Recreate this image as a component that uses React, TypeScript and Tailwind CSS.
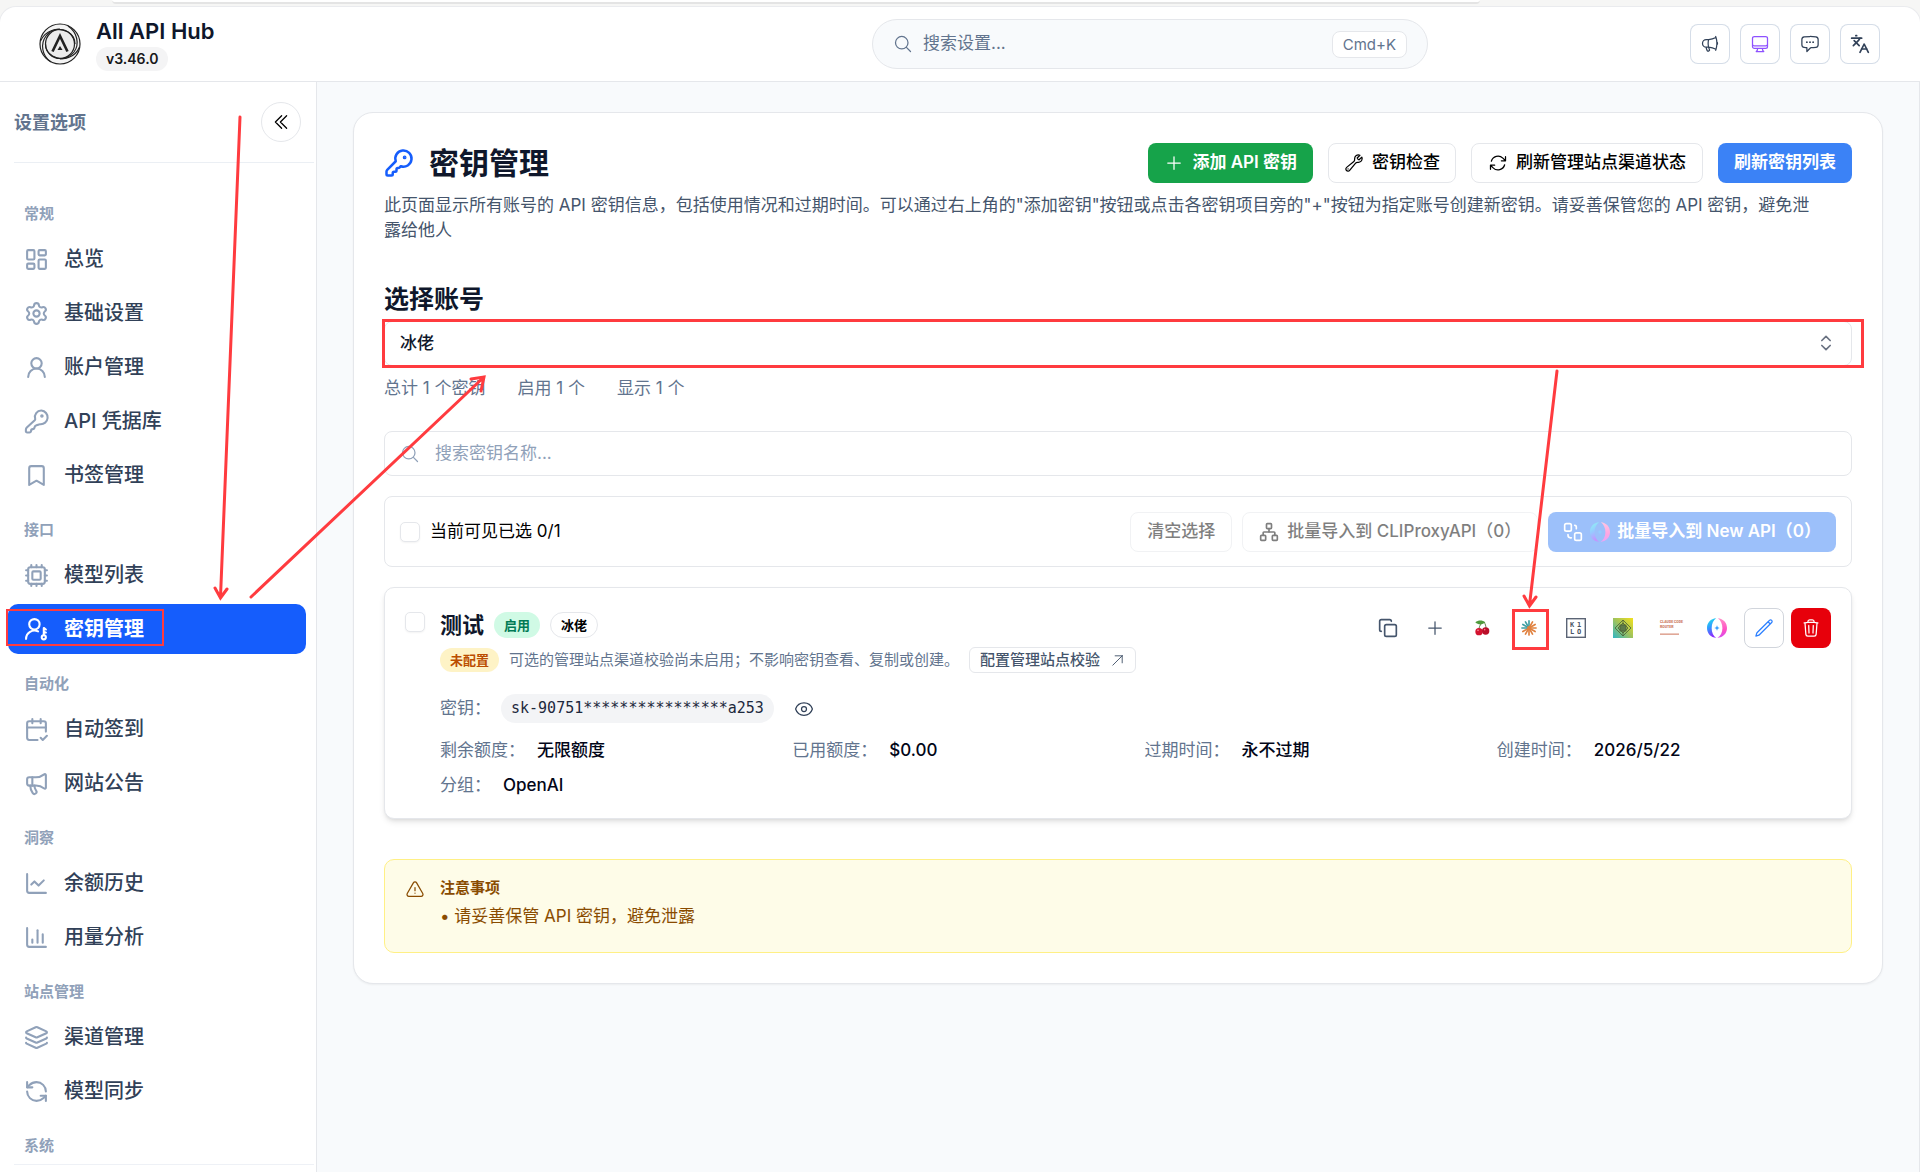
import type React from "react"
import {
    Bookmark,
    CalendarCheck2,
    ChartColumn,
    ChartLine,
    ChevronsUpDown,
    Copy,
    Cpu,
    KeyRound,
    Languages,
    Layers,
    LayoutDashboard,
    Megaphone,
    Network,
    RefreshCcw,
    Settings,
    UserRound,
} from "lucide-react"
import {
    HiOutlineArrowPath,
    HiOutlineArrowUpRight,
    HiOutlineChatBubbleLeftEllipsis,
    HiOutlineChevronDoubleLeft,
    HiOutlineComputerDesktop,
    HiOutlineExclamationTriangle,
    HiOutlineEye,
    HiOutlineMagnifyingGlass,
    HiOutlineMegaphone,
    HiOutlinePencil,
    HiOutlinePlus,
    HiOutlineTrash,
    HiOutlineWrench,
} from "react-icons/hi2"

type IconComponent = React.ComponentType<{ className?: string }>

interface NavItem {
    label: string
    icon: IconComponent
    active?: boolean
}

interface NavSection {
    title: string
    items: NavItem[]
}

const UserKeyIcon: IconComponent = ({ className }) => (
    <svg className={className} viewBox="0 0 24 24" fill="none" stroke="currentColor" strokeWidth="2" strokeLinecap="round" strokeLinejoin="round">
        <circle cx="10" cy="7" r="5" />
        <path d="M2 21a8 8 0 0 1 11.500-7.200" />
        <circle cx="19" cy="19.500" r="2" />
        <path d="M19 17.500V10.500l2 1.500M19 14l2 1" />
    </svg>
)

const RoundedKeyIcon: IconComponent = ({ className }) => (
    <svg className={className} viewBox="0 0 24 24" fill="none" stroke="currentColor" strokeWidth="2" strokeLinecap="round" strokeLinejoin="round">
        <path d="M16.5 1.5a6 6 0 0 0-5.8 7.6c.2.7 0 1.200-.4 1.600L2.700 17.800a3 3 0 0 0-.9 2.100v1.400a1.200 1.200 0 0 0 1.200 1.200h2.200a1.600 1.600 0 0 0 1.600-1.600c0-.9.7-1.600 1.600-1.600.8 0 1.400-.5 1.600-1.200l.3-1c.2-.6.6-1 1.200-1.200l1.300-.5c1-.4 1.700-.9 2.700-.8a6 6 0 1 0 1.200-13.100z" />
        <circle cx="17.200" cy="6.800" r=".7" fill="currentColor" />
    </svg>
)

const SwapBoxesIcon: IconComponent = ({ className }) => (
    <svg className={className} viewBox="0 0 24 24" fill="none" stroke="currentColor" strokeWidth="2" strokeLinecap="round" strokeLinejoin="round">
        <rect x="2" y="2" width="8" height="9" rx="2" />
        <rect x="14" y="13" width="8" height="9" rx="2" />
        <path d="M14 4a2 2 0 0 1 2 2v2M6 15v1a3 3 0 0 0 3 3h1" />
    </svg>
)

const HubLogo: IconComponent = ({ className }) => (
    <svg className={className} viewBox="0 0 42 42" fill="none" stroke="#222" strokeWidth="1.2">
        <circle cx="21" cy="21" r="20" fill="#f4f4f4" />
        <circle cx="21" cy="21" r="14.500" fill="#ececec" />
        <path d="M1.500 18C6 8 18 3 29 9c5 3 7 7 7 12" />
        <path d="M29 3c9 6 12 18 6 26-4 5-9 7-14 7" />
        <path d="M40.500 24c-4 10-16 15-27 9-5-3-7-7-7-12" />
        <path d="M12 39C3 33 1 21 7 13c4-5 9-7 14-7" />
        <path d="M13.500 28.500 21 13l7.500 15.500" strokeWidth="2.600" />
        <path d="m18.500 27 2.500-4 2.500 4z" fill="#222" stroke="none" />
    </svg>
)

const NewApiLogo: IconComponent = ({ className }) => (
    <svg className={className} viewBox="0 0 24 24">
        <defs>
            <linearGradient id="ringLeft" x1="0" y1="0" x2="0.300" y2="1">
                <stop offset="0" stopColor="#22f0e8" />
                <stop offset="0.500" stopColor="#2f9bff" />
                <stop offset="1" stopColor="#8a2cff" />
            </linearGradient>
            <linearGradient id="ringRight" x1="0" y1="0" x2="0" y2="1">
                <stop offset="0" stopColor="#ff8fc8" />
                <stop offset="0.600" stopColor="#ff4fc4" />
                <stop offset="1" stopColor="#d44df0" />
            </linearGradient>
        </defs>
        <path d="M11 .3C4.500.6 0 5.600 0 12c0 6.500 4.800 11.700 11 11.800-3.400-2-5.400-6.500-5.400-11.600S7.600 2.400 11 .3z" fill="url(#ringLeft)" />
        <path d="M13 .2c6.500.5 11 5.400 11 11.800 0 6.500-4.800 11.500-11.500 11.700 3.600-2 6-6.300 6-11.500C18.500 7 16.500 2.600 13 .2z" fill="url(#ringRight)" />
        <path d="M12 8.800l.9 2.300 2.300.9-2.300.9-.9 2.300-.9-2.300-2.300-.9 2.300-.9z" fill="#2f9bff" />
    </svg>
)

const CherryLogo: IconComponent = ({ className }) => (
    <svg className={className} viewBox="0 0 24 24" fill="none">
        <path d="M15 3C10 5 8 9 7.500 13M15 3c2 3 3 6 3 10" stroke="#4d6b2f" strokeWidth="1.300" />
        <path d="M17 3.500C12-.5 6 .5 2 3.500c4 4 10 4.500 15 0z" fill="#4f9a3c" />
        <circle cx="7.500" cy="17.500" r="5.500" fill="#d3122f" />
        <circle cx="17.500" cy="16.500" r="5.500" fill="#b90d28" />
        <circle cx="6" cy="15.500" r="1.200" fill="#ff8d9c" />
        <circle cx="16" cy="14.500" r="1.200" fill="#ff7488" />
    </svg>
)

const rays = [0, 30, 60, 90, 120, 150, 180, 210, 240, 270, 300, 330]

const StarburstLogo: IconComponent = ({ className }) => (
    <svg className={className} viewBox="0 0 24 24" strokeWidth="2" strokeLinecap="round">
        {rays.map((angle) => (
            <line key={angle} x1="12" y1="12" x2="12" y2="3.500" stroke={angle > 250 || angle === 0 ? "#3f9fa3" : "#e0813f"} transform={`rotate(${angle} 12 12)`} />
        ))}
        <circle cx="12" cy="12" r="2.500" fill="#e0813f" />
    </svg>
)

const KiloLogo: IconComponent = ({ className }) => (
    <svg className={className} viewBox="0 0 20 20">
        <rect x="0.700" y="0.700" width="18.600" height="18.600" fill="none" stroke="#5b6475" strokeWidth="1.400" />
        <g fill="#4b5566" fontFamily="DejaVu Sans Mono, monospace" fontSize="7" fontWeight="700">
            <text x="4" y="9">K</text>
            <text x="11" y="9">1</text>
            <text x="4" y="16">L</text>
            <text x="11" y="16">O</text>
        </g>
    </svg>
)

const DiamondLogo: IconComponent = ({ className }) => (
    <svg className={className} viewBox="0 0 20 20" fill="none" stroke="#4a5f35" strokeWidth="0.800">
        <defs>
            <linearGradient id="tile" x1="1" y1="0" x2="0" y2="1">
                <stop offset="0" stopColor="#f3e11c" />
                <stop offset="0.500" stopColor="#9fc35c" />
                <stop offset="1" stopColor="#2fb6c6" />
            </linearGradient>
        </defs>
        <rect width="20" height="20" fill="url(#tile)" stroke="none" />
        <path d="m10 2 8 8-8 8-8-8z" />
        <path d="m10 5 5 5-5 5-5-5z" />
        <rect x="7" y="7" width="6" height="6" fill="#5c7a4a" />
        <path d="M10 2v5M10 13v5" />
    </svg>
)

const RouterLogo: IconComponent = ({ className }) => (
    <svg className={className} viewBox="0 0 20 20" overflow="visible">
        <g fill="#cc7a63" fontFamily="Roboto, sans-serif" fontSize="3.500" fontWeight="900">
            <text x="0" y="5">CLAUDE CODE</text>
            <text x="0" y="10">ROUTER</text>
        </g>
        <rect y="15.500" width="19" height="1.300" fill="#d9937f" />
    </svg>
)

const sections: NavSection[] = [
    {
        title: "常规",
        items: [
            { label: "总览", icon: LayoutDashboard },
            { label: "基础设置", icon: Settings },
            { label: "账户管理", icon: UserRound },
            { label: "API 凭据库", icon: RoundedKeyIcon },
            { label: "书签管理", icon: Bookmark },
        ],
    },
    {
        title: "接口",
        items: [
            { label: "模型列表", icon: Cpu },
            { label: "密钥管理", icon: UserKeyIcon, active: true },
        ],
    },
    {
        title: "自动化",
        items: [
            { label: "自动签到", icon: CalendarCheck2 },
            { label: "网站公告", icon: Megaphone },
        ],
    },
    {
        title: "洞察",
        items: [
            { label: "余额历史", icon: ChartLine },
            { label: "用量分析", icon: ChartColumn },
        ],
    },
    {
        title: "站点管理",
        items: [
            { label: "渠道管理", icon: Layers },
            { label: "模型同步", icon: RefreshCcw },
        ],
    },
    { title: "系统", items: [] },
]

const headerActions = [
    { label: "公告", icon: HiOutlineMegaphone, color: "text-slate-700" },
    { label: "主题", icon: HiOutlineComputerDesktop, color: "text-violet-500" },
    { label: "反馈", icon: HiOutlineChatBubbleLeftEllipsis, color: "text-slate-700" },
    { label: "语言", icon: Languages, color: "text-slate-700" },
]

const keyActions = [
    { label: "复制", icon: Copy, size: "size-5" },
    { label: "添加", icon: HiOutlinePlus, size: "size-5" },
    { label: "Cherry Studio", icon: CherryLogo, size: "size-4" },
    { label: "Claude", icon: StarburstLogo, size: "size-5" },
    { label: "Kilo Code", icon: KiloLogo, size: "size-5" },
    { label: "CLIProxyAPI", icon: DiamondLogo, size: "size-5" },
    { label: "Claude Code Router", icon: RouterLogo, size: "size-5" },
    { label: "New API", icon: NewApiLogo, size: "size-5" },
]

const details = [
    { label: "剩余额度：", value: "无限额度" },
    { label: "已用额度：", value: "$0.00" },
    { label: "过期时间：", value: "永不过期" },
    { label: "创建时间：", value: "2026/5/22" },
    { label: "分组：", value: "OpenAI" },
]

const BrowserEdge = () => (
    <div className="h-[7px] shrink-0 bg-[#f6f6f5]">
        <div className="ml-28 mr-[440px] h-1 rounded-b-lg border-b-2 border-[#e4e4e4] bg-white" />
    </div>
)

const Header = () => (
    <header className="flex h-[75px] shrink-0 items-center rounded-t-2xl border-b border-gray-200 bg-white pl-[39px] pr-10 ring-1 ring-gray-200/70">
        <HubLogo className="size-[42px]" />
        <div className="ml-[15px] flex flex-col items-start">
            <h1 className="text-[22px] font-semibold leading-7 text-slate-900">All API Hub</h1>
            <span className="mt-0.5 rounded-full bg-zinc-100 px-2.5 text-[14px] font-semibold leading-6 text-zinc-900">v3.46.0</span>
        </div>
        <button className="ml-auto mr-[262px] flex h-[50px] w-[556px] items-center rounded-full border border-gray-200 bg-slate-50 px-5 text-slate-500">
            <HiOutlineMagnifyingGlass className="size-5" />
            <span className="ml-2.5 text-[17px]">搜索设置...</span>
            <kbd className="ml-auto rounded-lg border border-gray-200 bg-white px-2.5 font-[inherit] text-[15px] leading-[25px]">Cmd+K</kbd>
        </button>
        <div className="flex gap-2.5">
            {headerActions.map(({ label, icon: Icon, color }) => (
                <button key={label} aria-label={label} className={`flex size-10 items-center justify-center rounded-lg border border-slate-300/80 bg-white ${color}`}>
                    <Icon className="size-5" />
                </button>
            ))}
        </div>
    </header>
)

const Sidebar = () => (
    <aside className="flex w-[317px] shrink-0 flex-col border-r border-gray-200 bg-white">
        <div className="ml-3.5 mr-0.5 flex h-[81px] shrink-0 items-center justify-between border-b border-slate-200/70 pr-[13px]">
            <h2 className="text-[18px] font-semibold text-slate-500">设置选项</h2>
            <button aria-label="收起" className="flex size-10 items-center justify-center rounded-full border border-gray-200 bg-white text-black">
                <HiOutlineChevronDoubleLeft className="size-5" />
            </button>
        </div>
        <nav className="min-h-0 flex-1 overflow-hidden pl-2 pr-2.5 pt-[21px]">
            {sections.map((section) => (
                <div key={section.title}>
                    <h3 className="mb-2.5 mt-5 pl-4 text-[15px] font-semibold leading-5 text-slate-400">{section.title}</h3>
                    <ul className="flex flex-col gap-1">
                        {section.items.map(({ label, icon: Icon, active }) => (
                            <li key={label}>
                                <a
                                    href="#"
                                    className={`flex h-[50px] items-center gap-[15px] rounded-[10px] pl-4 text-[20px] ${
                                        active ? "bg-[#155dfc] font-semibold text-white" : "font-medium text-slate-700"
                                    }`}
                                >
                                    <Icon className={`size-[25px] ${active ? "text-white" : "text-slate-400"}`} />
                                    {label}
                                </a>
                            </li>
                        ))}
                    </ul>
                </div>
            ))}
        </nav>
        <div className="ml-3.5 mr-0.5 h-2 shrink-0 border-t border-slate-200/60" />
    </aside>
)

const PageHeading = () => (
    <div>
        <div className="flex items-center gap-[15px]">
            <KeyRound className="size-[30px] text-[#155dfc]" />
            <h2 className="mr-auto text-[30px] font-bold leading-10 text-slate-900">密钥管理</h2>
            <button className="flex h-10 items-center gap-2 rounded-lg bg-[#16a34a] px-4 text-[17px] font-semibold text-white">
                <HiOutlinePlus className="size-5" />
                添加 API 密钥
            </button>
            <button className="flex h-10 items-center gap-2 rounded-lg border border-gray-200 px-[15px] text-[17px] font-medium text-black">
                <HiOutlineWrench className="size-5" />
                密钥检查
            </button>
            <button className="flex h-10 items-center gap-2 rounded-lg border border-gray-200 px-4 text-[17px] font-medium text-black">
                <HiOutlineArrowPath className="size-5" />
                刷新管理站点渠道状态
            </button>
            <button className="h-10 rounded-lg bg-[#3b82f6] px-4 text-[17px] font-semibold text-white">刷新密钥列表</button>
        </div>
        <p className="mt-2.5 pr-8 text-[17px] leading-[25px] text-slate-600">
            此页面显示所有账号的 API 密钥信息，包括使用情况和过期时间。可以通过右上角的"添加密钥"按钮或点击各密钥项目旁的"+"按钮为指定账号创建新密钥。请妥善保管您的 API 密钥，避免泄露给他人
        </p>
    </div>
)

const AccountPicker = () => (
    <section className="mt-[39px]">
        <label htmlFor="account" className="block text-[25px] font-semibold leading-[34px] text-slate-900">
            选择账号
        </label>
        <div className="relative mt-[5px]">
            <select id="account" className="h-[45px] w-full appearance-none rounded-lg border border-gray-200 bg-white px-[15px] text-[17px] font-medium text-slate-900">
                <option>冰佬</option>
            </select>
            <ChevronsUpDown className="pointer-events-none absolute right-4 top-3 size-5 text-gray-500" />
        </div>
        <div className="mt-2.5 flex gap-8 text-[17px] leading-[25px] text-slate-500">
            <span>总计 1 个密钥</span>
            <span>启用 1 个</span>
            <span>显示 1 个</span>
        </div>
    </section>
)

const BatchBar = () => (
    <div className="mt-5 flex h-[71px] items-center gap-2.5 rounded-lg border border-gray-200 px-[15px] text-[17px]">
        <input id="select-all" type="checkbox" className="size-5 appearance-none rounded-[5px] border border-gray-200 bg-white shadow-xs" />
        <label htmlFor="select-all" className="mr-auto text-black">
            当前可见已选 0/1
        </label>
        <button disabled className="h-10 rounded-lg border border-gray-200 px-4 font-medium text-black opacity-50">
            清空选择
        </button>
        <button disabled className="flex h-10 items-center gap-2 rounded-lg border border-gray-200 px-4 font-medium text-black opacity-50">
            <Network className="size-5" />
            批量导入到 CLIProxyAPI（0）
        </button>
        <button disabled className="flex h-10 items-center gap-[7px] rounded-lg bg-[#3b82f6] px-[15px] font-semibold text-white opacity-50">
            <SwapBoxesIcon className="size-5" />
            <NewApiLogo className="size-5" />
            批量导入到 New API（0）
        </button>
    </div>
)

const KeyCard = () => (
    <article className="mt-5 flex items-start rounded-[10px] border border-gray-200 bg-white p-5 shadow-md">
        <input aria-label="选择 测试" type="checkbox" className="mt-1 size-5 shrink-0 appearance-none rounded-[5px] border border-gray-200 bg-white shadow-xs" />
        <div className="ml-[15px] flex-1">
            <div className="flex items-start justify-between">
                <div>
                    <div className="flex h-[34px] items-center gap-2.5">
                        <h3 className="text-[22px] font-semibold text-slate-900">测试</h3>
                        <span className="rounded-full bg-emerald-100 px-2.5 text-[13px] font-semibold leading-[26px] text-emerald-700">启用</span>
                        <span className="rounded-full border border-gray-200 px-2.5 text-[13px] font-semibold leading-6 text-black">冰佬</span>
                    </div>
                    <div className="mt-[5px] flex items-center gap-2.5 text-[15px] text-slate-500">
                        <span className="rounded-full bg-amber-100 px-2.5 text-[13px] font-bold leading-6 text-[#bb4d00]">未配置</span>
                        <span>可选的管理站点渠道校验尚未启用；不影响密钥查看、复制或创建。</span>
                        <a href="#" className="flex h-[26px] items-center gap-2.5 rounded-md border border-gray-200 px-2.5 font-medium text-slate-600">
                            配置管理站点校验
                            <HiOutlineArrowUpRight className="size-[15px]" />
                        </a>
                    </div>
                </div>
                <div className="flex gap-[7px] text-slate-600">
                    {keyActions.map(({ label, icon: Icon, size }) => (
                        <button key={label} aria-label={label} className="flex size-10 items-center justify-center rounded-lg">
                            <Icon className={size} />
                        </button>
                    ))}
                    <button aria-label="编辑" className="flex size-10 items-center justify-center rounded-lg border border-gray-300 text-blue-500">
                        <HiOutlinePencil className="size-5" />
                    </button>
                    <button aria-label="删除" className="flex size-10 items-center justify-center rounded-lg bg-[#e7000b] text-white">
                        <HiOutlineTrash className="size-5" />
                    </button>
                </div>
            </div>
            <div className="mt-[21px] flex items-center text-[17px] text-slate-500">
                <span>密钥：</span>
                <code className="ml-2.5 rounded-full bg-gray-100 px-2.5 font-['DejaVu_Sans_Mono',monospace] text-[15px] leading-[29px] text-slate-800">
                    sk-90751****************a253
                </code>
                <button aria-label="显示密钥" className="ml-5 text-slate-700">
                    <HiOutlineEye className="size-5" />
                </button>
            </div>
            <dl className="mt-[15px] grid grid-cols-4 gap-x-[18px] gap-y-2.5 text-[17px] leading-[25px]">
                {details.map(({ label, value }) => (
                    <div key={label} className="flex gap-3">
                        <dt className="text-slate-500">{label}</dt>
                        <dd className="font-medium text-slate-950">{value}</dd>
                    </div>
                ))}
            </dl>
        </div>
    </article>
)

const Notice = () => (
    <div className="mt-10 flex h-[94px] rounded-[10px] border border-yellow-200 bg-yellow-50 px-5 pt-[15px] text-yellow-800">
        <HiOutlineExclamationTriangle className="mt-[5px] size-5" />
        <div className="ml-[15px]">
            <h4 className="text-[15px] font-semibold leading-[25px]">注意事项</h4>
            <p className="mt-1 text-[17px] leading-[25px]">• 请妥善保管 API 密钥，避免泄露</p>
        </div>
    </div>
)

// Callouts that walk the reader from the menu to the account and the export button
const Annotations = () => (
    <svg className="pointer-events-none absolute left-0 top-0" width="1920" height="1172" fill="none" stroke="#ff3b3f" strokeWidth="3">
        <path d="M240 117 220.500 597M215 588l5.500 10 6.500-9" strokeLinecap="round" />
        <path d="M251 597 484 377M471 379l13-2-3 14" strokeLinecap="round" />
        <path d="M1557 371 1529.500 605M1524 596l5.500 10 6.500-9" strokeLinecap="round" />
        <rect x="383.500" y="320.500" width="1479" height="46" />
        <rect x="7" y="610" width="156" height="35" strokeWidth="2" />
        <rect x="1513.500" y="610.500" width="34" height="38" />
    </svg>
)

const App = () => (
    <div className="relative flex h-screen flex-col overflow-hidden bg-[#f6f6f5] font-[Inter,'Noto_Sans_CJK_SC',sans-serif]">
        <BrowserEdge />
        <Header />
        <div className="flex min-h-0 flex-1">
            <Sidebar />
            <main className="flex-1 border-r border-gray-200 bg-slate-50 px-9 pt-[30px]">
                <div className="rounded-[20px] border border-gray-200 bg-white p-[30px] shadow-xs">
                    <PageHeading />
                    <AccountPicker />
                    <div className="mt-[30px] flex h-[45px] items-center rounded-lg border border-gray-200 px-[15px]">
                        <HiOutlineMagnifyingGlass className="size-5 text-slate-400" />
                        <input aria-label="搜索密钥名称" placeholder="搜索密钥名称..." className="ml-[15px] flex-1 text-[17px] outline-none placeholder:text-slate-400" />
                    </div>
                    <BatchBar />
                    <KeyCard />
                    <Notice />
                </div>
            </main>
        </div>
        <Annotations />
    </div>
)

export default App
